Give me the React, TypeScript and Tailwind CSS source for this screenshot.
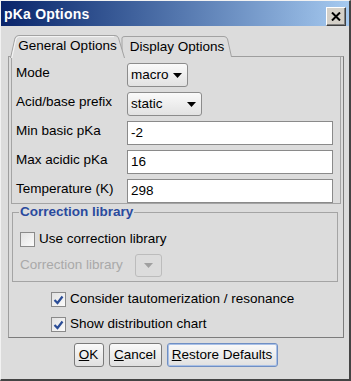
import React from "react";

const FONT = { fontFamily: '"Liberation Sans", Arial, sans-serif' };

function Check({ checked }: { checked?: boolean }) {
  return (
    <span className="w-[15px] h-[15px] border border-[#8a8a8a] bg-gradient-to-br from-[#e2e2e2] to-[#fbfbfb] flex items-center justify-center shrink-0">
      {checked && (
        <svg width="11" height="10" viewBox="0 0 11 10">
          <path d="M1.5 5 L4.5 8 L9.5 1.5" fill="none" stroke="#2b4d97" strokeWidth="2.2" />
        </svg>
      )}
    </span>
  );
}

function Arrow({ color = "#000" }: { color?: string }) {
  return (
    <svg width="9" height="5" viewBox="0 0 9 5">
      <path d="M0 0 L9 0 L4.5 5 Z" fill={color} />
    </svg>
  );
}

function Select({ value, width }: { value: string; width: string }) {
  return (
    <div className={`${width} h-[24px] rounded-[3px] border border-[#8c8c8c] bg-gradient-to-b from-[#fafafa] to-[#e2e2e2] flex items-center justify-between pl-[3px] pr-[5px] text-[13.5px] text-black`}>
      <span>{value}</span>
      <Arrow />
    </div>
  );
}

function Field({ value }: { value: string }) {
  return (
    <div className="w-[206px] h-[24px] border border-[#8a8a8a] bg-white flex items-center pl-[3px] text-[13.5px] text-black">
      {value}
    </div>
  );
}

function Row({ label, children }: { label: string; children: React.ReactNode }) {
  return (
    <div className="flex h-[24px]">
      <div className="w-[115px] pl-[4px] pt-[2px] text-[13.5px] leading-[16px] text-black">{label}</div>
      {children}
    </div>
  );
}

function Btn({ k, rest, width, focus }: { k: string; rest: string; width: string; focus?: boolean }) {
  return (
    <div
      className={`${width} h-[24px] rounded-[3px] border ${focus ? "border-[#6f8fc4] shadow-[inset_0_0_0_1px_#a9c0e6]" : "border-[#7a7a7a]"} bg-gradient-to-b from-[#fafafa] to-[#e0e0e0] flex items-center justify-center text-[13.5px] text-black`}
    >
      <span className="underline">{k}</span>
      {rest}
    </div>
  );
}

export default function App() {
  return (
    <div
      style={FONT}
      className="w-[351px] h-[381px] bg-[#dcdcdc] border-l border-t border-l-[#f2f2f2] border-t-[#f2f2f2] border-r-2 border-b-2 border-r-[#444] border-b-[#444] flex flex-col"
    >
      <div className="h-[25px] bg-gradient-to-r from-[#0a246a] to-[#a6caf0] flex items-center justify-between pl-[3px] pr-[3px]">
        <span className="text-white font-bold text-[14px] tracking-[0.2px] pt-[1px]">pKa Options</span>
        <div className="w-[20px] h-[19px] mt-[6px] bg-[#d4d0c8] border border-t-white border-l-white border-r-[#404040] border-b-[#404040] shadow-[inset_-1px_-1px_0_#808080] flex items-center justify-center">
          <svg width="10" height="9" viewBox="0 0 10 9">
            <path d="M1 0.5 L9 8.5 M9 0.5 L1 8.5" stroke="#000" strokeWidth="2" />
          </svg>
        </div>
      </div>

      <div className="pl-[7px] flex flex-col">
        <div className="relative h-[23px] mt-[8px] -mb-px flex pl-[2px] text-[13.5px] text-black">
          <div className="relative z-10 w-[115px] h-[24px] flex items-center justify-center pt-[1px]">
            <svg className="absolute inset-0" width="115" height="24" viewBox="0 0 115 24">
              <path d="M0.5 24 L5 4 Q6 1.5 9 1.5 L105 1.5 Q107.5 1.5 108.5 4 L114.5 24" fill="#dcdcdc" stroke="#a2a2a2" />
              <path d="M1.8 24 L6 5 Q7 2.6 9.5 2.6 L104 2.6" fill="none" stroke="#f6f6f6" />
            </svg>
            <span className="relative">General Options</span>
          </div>
          <div className="relative -ml-[7px] w-[114px] h-[22px] mt-[1px] flex items-center justify-center pl-[4px] pt-[2px]">
            <svg className="absolute inset-0" width="114" height="22" viewBox="0 0 114 22">
              <path d="M4 22 L4 3 Q4 1.5 7 1.5 L106 1.5 Q108.5 1.5 109.5 4 L113.5 22" fill="#dcdcdc" stroke="#a2a2a2" />
            </svg>
            <span className="relative">Display Options</span>
          </div>
        </div>

        <div className="w-[336px] border border-[#9e9e9e] border-r-[#7c7c7c] border-b-[#7c7c7c] pb-[5px] flex flex-col">
          <div className="ml-[2px] w-[330px] h-[147px] border border-[#a4a4a4] border-t-0 pt-[6px] flex flex-col gap-[5px]">
            <Row label="Mode">
              <Select value="macro" width="w-[61px]" />
            </Row>
            <Row label="Acid/base prefix">
              <Select value="static" width="w-[75px]" />
            </Row>
            <Row label="Min basic pKa">
              <Field value="-2" />
            </Row>
            <Row label="Max acidic pKa">
              <Field value="16" />
            </Row>
            <Row label="Temperature (K)">
              <Field value="298" />
            </Row>
          </div>

          <fieldset className="ml-[3px] w-[326px] border border-[#a4a4a4] pt-[12px] pb-[4px] pl-[7px]">
            <legend className="ml-[-1px] px-[1px] text-[13.5px] leading-[16px] font-bold text-[#2a4a9e]">Correction library</legend>
            <div className="flex items-center h-[15px] gap-[4px] text-[13.5px] text-black">
              <Check />
              <span>Use correction library</span>
            </div>
            <div className="flex items-center mt-[7px] h-[23px] text-[13.5px] text-[#a9a9a9]">
              <span className="w-[115px]">Correction library</span>
              <div className="w-[27px] h-[23px] rounded-[3px] border border-[#bcbcbc] flex items-center justify-center">
                <Arrow color="#a0a0a0" />
              </div>
            </div>
          </fieldset>

          <div className="mt-[10px] pl-[42px] flex flex-col gap-[10px] text-[13.5px] text-black">
            <div className="flex items-center h-[15px] gap-[4px]">
              <Check checked />
              <span>Consider tautomerization / resonance</span>
            </div>
            <div className="flex items-center h-[15px] gap-[4px]">
              <Check checked />
              <span>Show distribution chart</span>
            </div>
          </div>
        </div>
      </div>

      <div className="mt-[5px] flex justify-center gap-[5px] pl-[1px]">
        <Btn k="O" rest="K" width="w-[30px]" />
        <Btn k="C" rest="ancel" width="w-[53px]" />
        <Btn k="R" rest="estore Defaults" width="w-[111px]" focus />
      </div>
    </div>
  );
}
